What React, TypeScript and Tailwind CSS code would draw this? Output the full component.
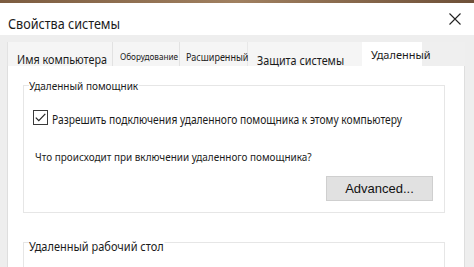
import React from "react";

export default function App() {
  return (
    <div
      className="w-[474px] h-[267px] overflow-hidden bg-white flex flex-col text-[#1b1b1b]"
      style={{ fontFamily: '"Noto Sans", "Open Sans", sans-serif' }}
    >
      <div className="h-[3px] bg-gradient-to-r from-[#7c5c40] via-[#a08060] to-[#6e5038] shrink-0" />
      <div className="h-[32px] shrink-0 flex items-center pl-[8px]">
        <span className="block w-fit mt-[7px] origin-left scale-x-[0.84] text-[15px] leading-[18px] whitespace-nowrap">
          Свойства системы
        </span>
        <div className="ml-auto mr-[13px] w-[12px] h-[12px] shrink-0 -mt-[1px]">
          <svg width="12" height="12" viewBox="0 0 12 12" className="block">
            <path d="M0.5 0.5L11.5 11.5M11.5 0.5L0.5 11.5" stroke="#222" strokeWidth="1.1" />
          </svg>
        </div>
      </div>
      <div className="flex-1 bg-[#eeeeee] flex pl-[7px] pt-[7px]">
        <div className="w-[458px] shrink-0 flex flex-col">
          <div className="h-[24px] flex items-stretch shrink-0 bg-[#f5f5f5]">
            <div className="w-[106px] shrink-0 border-l border-r border-[#e2e2e2] pl-[9px] pt-[9px]">
              <span className="block w-fit origin-left scale-x-[0.83] text-[13px] leading-[16px] whitespace-nowrap">
                Имя компьютера
              </span>
            </div>
            <div className="w-[67px] shrink-0 border-r border-[#e2e2e2] pl-[7px] pt-[7px]">
              <span className="block w-fit origin-left scale-x-[0.91] text-[9px] leading-[16px] whitespace-nowrap">
                Оборудование
              </span>
            </div>
            <div className="w-[68px] shrink-0 border-r border-[#e8e8e8] pl-[6px] pt-[7px]">
              <span className="block w-fit origin-left scale-x-[0.86] text-[10.5px] leading-[16px] whitespace-nowrap">
                Расширенный
              </span>
            </div>
            <div className="w-[114px] shrink-0 pl-[9px] pt-[10px]">
              <span className="block w-fit origin-left scale-x-[0.83] text-[13px] leading-[16px] whitespace-nowrap">
                Защита системы
              </span>
            </div>
            <div className="w-[60px] shrink-0 bg-white pl-[9px] pt-[5px] relative z-10">
              <span className="block w-fit text-[11px] leading-[16px] whitespace-nowrap">Удаленный</span>
            </div>
            <div className="flex-1 bg-[#efefef]" />
          </div>
          <div className="flex-1 bg-white border-l border-r border-[#dedede] pl-[15px] pt-[19px] flex flex-col">
            <div className="w-[422px] border border-[#e6e6e6] h-[128px] flex flex-col">
              <div className="-mt-[8px] ml-[5px] w-fit">
                <span className="block w-fit origin-left scale-x-[0.87] bg-white pr-[1px] text-[11.5px] leading-[16px] whitespace-nowrap">
                  Удаленный помощник
                </span>
              </div>
              <div className="flex items-start mt-[16px] ml-[9px]">
                <div className="w-[15px] h-[15px] shrink-0 border border-[#3a3a3a] flex items-center justify-center">
                  <svg width="13" height="13" viewBox="0 0 13 13" className="block">
                    <path d="M1.8 6.6L4.8 9.6L11.3 2.9" fill="none" stroke="#222" strokeWidth="1.2" />
                  </svg>
                </div>
                <span className="ml-[4px] mt-[2px] block w-fit shrink-0 origin-left scale-x-[0.82] text-[12.5px] leading-[16px] whitespace-nowrap">
                  Разрешить подключения удаленного помощника к этому компьютеру
                </span>
              </div>
              <div className="mt-[21px] ml-[11px]">
                <span className="block w-fit origin-left scale-x-[0.865] text-[11.5px] leading-[16px] whitespace-nowrap">
                  Что происходит при включении удаленного помощника?
                </span>
              </div>
              <div className="flex justify-end mt-[11px] mr-[11px]">
                <div
                  className="w-[107px] h-[25px] bg-[#e1e1e1] border border-[#cfcfcf] flex items-center justify-center text-[13px] leading-none text-[#111]"
                  style={{ fontFamily: '"Liberation Sans", Arial, sans-serif' }}
                >
                  Advanced...
                </div>
              </div>
            </div>
            <div className="w-[422px] mt-[29px] border border-[#e6e6e6] flex-1 border-b-0">
              <div className="-mt-[4px] ml-[5px] w-fit">
                <span className="block w-fit origin-left scale-x-[0.88] bg-white pr-[1px] text-[12.5px] leading-[16px] whitespace-nowrap">
                  Удаленный рабочий стол
                </span>
              </div>
            </div>
          </div>
        </div>
      </div>
    </div>
  );
}
